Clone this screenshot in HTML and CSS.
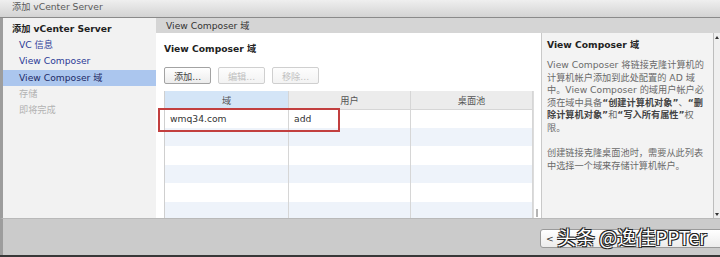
FILE: index.html
```html
<!DOCTYPE html>
<html lang="zh-CN">

<head>
    <meta charset="UTF-8">
    <title>添加 vCenter Server</title>
    <link rel="stylesheet" href="styles.css">
</head>

<body>
    <div class="window">
        <div class="titlebar">添加 vCenter Server</div>

        <div class="body">
            <nav class="steps">
                <div class="step-head">添加 vCenter Server</div>
                <div class="step link">VC 信息</div>
                <div class="step link">View Composer</div>
                <div class="step current">View Composer 域</div>
                <div class="step disabled">存储</div>
                <div class="step disabled">即将完成</div>
            </nav>

            <div class="main">
                <div class="page-head">View Composer 域</div>
                <div class="panes">
                    <section class="content">
                        <h2 class="content-title">View Composer 域</h2>
                        <div class="toolbar">
                            <button class="btn">添加...</button>
                            <button class="btn" disabled>编辑...</button>
                            <button class="btn" disabled>移除...</button>
                        </div>
                        <div class="grid-wrap">
                            <table class="grid">
                                <thead>
                                    <tr>
                                        <th class="sorted">域</th>
                                        <th>用户</th>
                                        <th>桌面池</th>
                                    </tr>
                                </thead>
                                <tbody>
                                    <tr><td>wmq34.com</td><td>add</td><td></td></tr>
                                    <tr><td></td><td></td><td></td></tr>
                                    <tr><td></td><td></td><td></td></tr>
                                    <tr><td></td><td></td><td></td></tr>
                                    <tr><td></td><td></td><td></td></tr>
                                    <tr><td></td><td></td><td></td></tr>
                                </tbody>
                            </table>
                            <div class="grid-scroll"><span class="grip"></span></div>
                        </div>
                        <div class="highlight"></div>
                    </section>

                    <aside class="help">
                        <h3 class="help-title">View Composer 域</h3>
                        <p>View Composer 将链接克隆计算机的<br>计算机帐户添加到此处配置的 AD 域<br>中。View Composer 的域用户帐户必<br>须在域中具备<b>“创建计算机对象”</b>、<b>“删<br>除计算机对象”</b>和<b>“写入所有属性”</b>权<br>限。</p>
                        <p>创建链接克隆桌面池时，需要从此列表<br>中选择一个域来存储计算机帐户。</p>
                    </aside>

                    <div class="vscroll">
                        <span class="arrow up"></span>
                        <span class="arrow down"></span>
                    </div>
                </div>
            </div>
        </div>

        <div class="footer">
            <button class="btn back">&lt;</button>
            <span class="watermark">头条 @逸佳PPTer</span>
        </div>
        <div class="taskbar"></div>
    </div>
</body>

</html>
```

FILE: styles.css
```css
/* Global settings */
*, *::before, *::after {
    box-sizing: border-box;
}

html,
body {
    margin: 0;
    padding: 0;
    width: 720px;
    height: 257px;
    overflow: hidden;
    font-family: "DejaVu Sans", "Noto Sans CJK SC", sans-serif;
    font-size: 9.2px;
    color: #333;
}

.window {
    position: relative;
    width: 720px;
    height: 257px;
    display: flex;
    flex-direction: column;
    overflow: hidden;
}

.titlebar {
    height: 18px;
    line-height: 14px;
    padding-left: 12px;
    color: #5a5a5a;
    background: linear-gradient(#efefef, #d3d3d3);
    border-bottom: 1px solid #8a8a8a;
}

.body {
    display: flex;
    height: 200px;
    border-left: 3px solid #9d9d9d;
}

/* Wizard steps */
.steps {
    width: 153px;
    background-color: #f2f2f2;
    padding-top: 3px;
}

.step-head {
    height: 16px;
    line-height: 16px;
    padding-left: 9px;
    font-weight: bold;
    color: #222;
}

.step {
    height: 16px;
    line-height: 16px;
    padding-left: 16px;
}

.step.link {
    color: #2b3a96;
}

.step.current {
    background-color: #abc6ee;
    color: #1d2a66;
    margin-top: 1px;
}

.step.disabled {
    color: #b3b3b3;
}

/* Main area */
.main {
    flex: 1;
    display: flex;
    flex-direction: column;
}

.page-head {
    height: 15px;
    line-height: 15px;
    padding-left: 10px;
    background-color: #d5d5d5;
    color: #333;
}

.panes {
    flex: 1;
    display: flex;
}

.content {
    position: relative;
    width: 385px;
    background-color: #fff;
    padding: 10px 0 0 8px;
}

.content-title {
    margin: 0;
    font-size: 9.2px;
    line-height: 12px;
    color: #222;
}

.toolbar {
    display: flex;
    gap: 7px;
    margin-top: 12px;
}

.btn {
    height: 17px;
    width: 47px;
    padding: 0;
    font-family: inherit;
    font-size: 9.2px;
    color: #444;
    background: linear-gradient(#ffffff, #ececec);
    border: 1px solid #a3a3a3;
    border-radius: 2px;
}

.btn:disabled {
    color: #c0c0c0;
    border-color: #cfcfcf;
    background: linear-gradient(#fdfdfd, #f3f3f3);
}

.grid-wrap {
    display: flex;
    margin-top: 7px;
}

.grid {
    width: 369px;
    border-collapse: collapse;
    table-layout: fixed;
    border-left: 1px solid #cfcfcf;
}

.grid th {
    height: 18px;
    font-weight: normal;
    color: #555;
    background-color: #ececec;
    border-right: 1px solid #d6d6d6;
    border-bottom: 1px solid #d6d6d6;
    text-align: center;
}

.grid th.sorted {
    width: 124px;
    background-color: #d4e5f7;
}

.grid th:nth-child(2) {
    width: 122px;
}

.grid td {
    height: 18.5px;
    padding: 0 0 0 5px;
    color: #333;
    border-right: 1px solid #d6d6d6;
}

.grid tbody tr:nth-child(even) td {
    background-color: #eef3fa;
}

.grid-scroll {
    position: relative;
    width: 7px;
    border-left: 1px solid #dcdcdc;
}

.grip {
    position: absolute;
    left: 2px;
    top: 118px;
    width: 2px;
    height: 8px;
    background-color: #b5b5b5;
}

.highlight {
    position: absolute;
    left: 2px;
    top: 75px;
    width: 182px;
    height: 24px;
    border: 2px solid #c23f3f;
}

/* Help pane */
.help {
    width: 172px;
    background-color: #f3f3f3;
    border-left: 1px solid #c9c9c9;
    padding: 6px 0 0 5px;
    color: #6a6a6a;
    white-space: nowrap;
}

.help-title {
    margin: 0 0 8px;
    font-size: 9.2px;
    line-height: 12px;
    color: #222;
}

.help p {
    margin: 0 0 13px;
    line-height: 12.5px;
}

.help b {
    color: #444;
}

.vscroll {
    position: relative;
    flex: 1;
    background-color: #efefef;
    border-left: 1px solid #bdbdbd;
}

.arrow {
    position: absolute;
    left: 1px;
    width: 0;
    height: 0;
    border-left: 2.5px solid transparent;
    border-right: 2.5px solid transparent;
}

.arrow.up {
    top: 3px;
    border-bottom: 3px solid #333;
}

.arrow.down {
    bottom: 4px;
    border-top: 3px solid #333;
}

/* Footer */
.footer {
    position: relative;
    flex: 1;
    display: flex;
    justify-content: flex-end;
    align-items: flex-start;
    padding-top: 10px;
    background-color: #cbcbcb;
    border-top: 1px solid #b9b9b9;
    border-left: 3px solid #9d9d9d;
}

.btn.back {
    width: 185px;
    height: 19px;
    margin-right: -5px;
    text-align: left;
    padding-left: 5px;
    color: #333;
    border-color: #9a9a9a;
    border-radius: 3px;
}

.watermark {
    position: absolute;
    left: 554px;
    top: 6px;
    font-family: "Noto Sans CJK SC", sans-serif;
    font-size: 19px;
    line-height: 24px;
    color: #fff;
    text-shadow: -1px -1px 0 #222, 1px -1px 0 #222, -1px 1px 0 #222, 1px 1px 0 #222;
}

.taskbar {
    height: 2px;
    background-color: #383838;
}
```
